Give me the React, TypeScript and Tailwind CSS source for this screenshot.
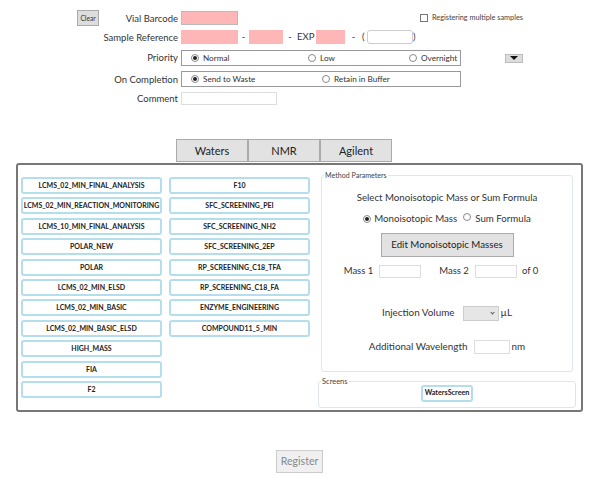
const METHODS_LEFT = [
  "LCMS_02_MIN_FINAL_ANALYSIS",
  "LCMS_02_MIN_REACTION_MONITORING",
  "LCMS_10_MIN_FINAL_ANALYSIS",
  "POLAR_NEW",
  "POLAR",
  "LCMS_02_MIN_ELSD",
  "LCMS_02_MIN_BASIC",
  "LCMS_02_MIN_BASIC_ELSD",
  "HIGH_MASS",
  "FIA",
  "F2",
];

const METHODS_RIGHT = [
  "F10",
  "SFC_SCREENING_PEI",
  "SFC_SCREENING_NH2",
  "SFC_SCREENING_2EP",
  "RP_SCREENING_C18_TFA",
  "RP_SCREENING_C18_FA",
  "ENZYME_ENGINEERING",
  "COMPOUND11_5_MIN",
];

function Radio({ checked }: { checked?: boolean }) {
  return (
    <span className="flex h-[8px] w-[8px] shrink-0 items-center justify-center rounded-full border border-[#8a8a8a] bg-white">
      {checked && <span className="h-[4px] w-[4px] rounded-full bg-[#222]" />}
    </span>
  );
}

function MethodButton({ label }: { label: string }) {
  return (
    <button
      type="button"
      className="flex h-[17px] w-[141px] items-center justify-center whitespace-nowrap rounded-[3px] border-2 border-[#b4deeb] bg-white text-[7px] font-bold text-[#222]"
    >
      {label}
    </button>
  );
}

export default function App() {
  return (
    <div className="h-[481px] w-[602px] overflow-hidden bg-white font-['Lato',sans-serif] text-[9.5px] leading-none text-[#333]">
      <div className="flex h-[139px] flex-col pt-[10px]">
        <div className="flex h-[16px] items-center">
          <div className="flex w-[178px] items-center justify-between pl-[77px]">
            <button
              type="button"
              className="h-[16px] w-[22px] border border-[#aaa] bg-[#ddd] text-[6.6px] text-[#333]"
            >
              Clear
            </button>
            <span className="pt-px">Vial Barcode</span>
          </div>
          <div className="ml-[3px] h-[14px] w-[57px] border border-[#bbb] bg-[#ffb6b6]" />
          <div className="ml-[182px] flex items-center gap-[4px] text-[7.3px] text-[#444]">
            <span className="h-[8px] w-[8px] border border-[#777] bg-white" />
            Registering multiple samples
          </div>
        </div>

        <div className="mt-[4px] flex h-[14px] items-center">
          <div className="w-[178px] pt-px text-right">Sample Reference</div>
          <div className="ml-[3px] h-[14px] w-[57px] bg-[#ffb6b6]" />
          <span className="w-[11px] text-center">-</span>
          <div className="h-[14px] w-[34px] bg-[#ffb6b6]" />
          <span className="w-[14px] text-center">-</span>
          <span className="w-[19px]">EXP</span>
          <div className="h-[14px] w-[29px] bg-[#ffb6b6]" />
          <span className="w-[17px] text-center">-</span>
          <span className="w-[5px]">(</span>
          <div className="h-[14px] w-[46px] rounded-[3px] border border-[#ccc] bg-white" />
          <span>)</span>
        </div>

        <div className="mt-[6px] flex h-[16px] items-center">
          <div className="w-[178px] text-right">Priority</div>
          <div className="ml-[3px] flex h-[16px] w-[280px] items-center border border-[#999] pl-[9px] text-[8.2px]">
            <span className="flex w-[117px] items-center gap-[4px]">
              <Radio checked />
              Normal
            </span>
            <span className="flex w-[101px] items-center gap-[4px]">
              <Radio />
              Low
            </span>
            <span className="flex items-center gap-[4px]">
              <Radio />
              Overnight
            </span>
          </div>
          <button
            type="button"
            className="ml-[44px] flex h-[9px] w-[18px] items-center justify-center border border-[#bbb] bg-[#ddd]"
          >
            <span className="h-0 w-0 border-x-[4px] border-t-[4px] border-x-transparent border-t-[#111]" />
          </button>
        </div>

        <div className="mt-[5px] flex h-[16px] items-center">
          <div className="w-[178px] pt-px text-right">On Completion</div>
          <div className="ml-[3px] flex h-[16px] w-[280px] items-center border border-[#999] pl-[9px] text-[8.2px]">
            <span className="flex w-[131px] items-center gap-[4px]">
              <Radio checked />
              Send to Waste
            </span>
            <span className="flex items-center gap-[4px]">
              <Radio />
              Retain in Buffer
            </span>
          </div>
        </div>

        <div className="mt-[5px] flex h-[13px] items-center">
          <div className="w-[178px] pt-px text-right">Comment</div>
          <div className="ml-[3px] h-[13px] w-[96px] border border-[#ddd] bg-white" />
        </div>
      </div>

      <div className="ml-[176px] flex h-[23px]">
        {["Waters", "NMR", "Agilent"].map((tab) => (
          <div
            key={tab}
            className="flex h-[23px] w-[72px] items-center justify-center border border-[#aaa] bg-[#e2e2e2] pb-px text-[11px] text-[#222]"
          >
            {tab}
          </div>
        ))}
      </div>

      <div className="mt-px ml-[16px] flex h-[249px] w-[567px] rounded-[3px] border-2 border-[#777] pt-[12px] pl-[3px]">
        <div className="flex flex-col gap-[3.4px]">
          {METHODS_LEFT.map((m) => (
            <MethodButton key={m} label={m} />
          ))}
        </div>
        <div className="ml-[7px] flex flex-col gap-[3.4px]">
          {METHODS_RIGHT.map((m) => (
            <MethodButton key={m} label={m} />
          ))}
        </div>

        <div className="ml-[8px] flex w-[258px] flex-col">
          <fieldset className="mx-[3px] -mt-[5px] flex h-[200px] flex-col items-center rounded-[3px] border border-[#dde6ee] pt-[14px]">
            <legend className="ml-[2px] px-[1px] text-[7.1px] text-[#444]">Method Parameters</legend>
            <div className="text-[9.7px]">Select Monoisotopic Mass or Sum Formula</div>
            <div className="mt-[11px] flex items-center text-[9.7px]">
              <Radio checked />
              <span className="ml-[3px]">Monoisotopic Mass</span>
              <span className="ml-[6px] -translate-y-[2px]">
                <Radio />
              </span>
              <span className="ml-[4px]">Sum Formula</span>
            </div>
            <button
              type="button"
              className="mt-[9px] h-[24px] w-[133px] border border-[#aaa] bg-[#e2e2e2] text-[9.7px] text-[#222]"
            >
              Edit Monoisotopic Masses
            </button>
            <div className="mt-[8px] flex items-center pr-[12px]">
              <span>Mass 1</span>
              <div className="ml-[6px] h-[13px] w-[42px] border border-[#ddd]" />
              <span className="ml-[18px]">Mass 2</span>
              <div className="ml-[6px] h-[13px] w-[42px] border border-[#ddd]" />
              <span className="ml-[5px]">of 0</span>
            </div>
            <div className="mt-[28px] flex items-center text-[9.9px]">
              <span>Injection Volume</span>
              <div className="ml-[8px] flex h-[15px] w-[36px] items-center justify-end border border-[#ccc] bg-[#e6e6e6] pr-[4px]">
                <span className="h-[3px] w-[3px] -translate-y-[1px] rotate-45 border-r border-b border-[#555]" />
              </div>
              <span className="ml-[2px]">µL</span>
            </div>
            <div className="mt-[19px] flex items-center text-[9.9px]">
              <span>Additional Wavelength</span>
              <div className="ml-[6px] h-[14px] w-[36px] border border-[#ddd]" />
              <span className="ml-[2px]">nm</span>
            </div>
          </fieldset>
          <fieldset className="mt-[6px] flex h-[30px] flex-col items-center rounded-[3px] border border-[#dde6ee]">
            <legend className="ml-[2px] px-[1px] text-[7.5px] text-[#444]">Screens</legend>
            <button
              type="button"
              className="h-[17px] w-[52px] -translate-y-[1px] rounded-[3px] border-2 border-[#b4deeb] bg-white text-[7.2px] font-bold whitespace-nowrap text-[#222]"
            >
              WatersScreen
            </button>
          </fieldset>
        </div>
      </div>

      <div className="mt-[38px] ml-[276px]">
        <button
          type="button"
          className="h-[23px] w-[47px] border border-[#ccc] bg-[#f0f0f0] text-[10.6px] text-[#888]"
        >
          Register
        </button>
      </div>
    </div>
  );
}
